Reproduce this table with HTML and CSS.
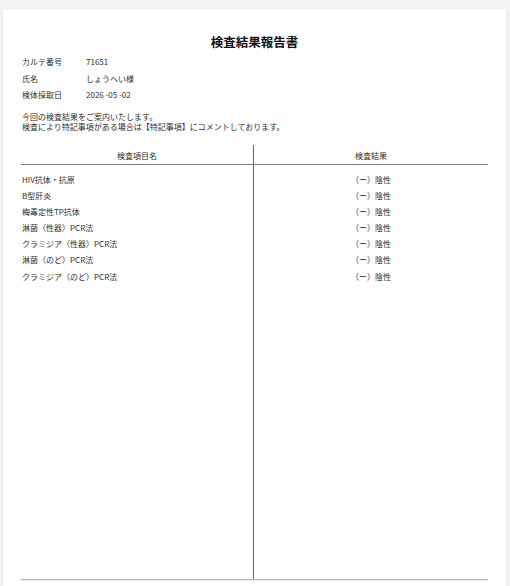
FILE: index.html
```html
<!DOCTYPE html>
<html lang="ja">
<head>
<meta charset="utf-8">
<link rel="stylesheet" href="styles.css">
</head>
<body>
<div class="page">
  <h1 class="title">検査結果報告書</h1>
  <div class="info">
    <span class="label">カルテ番号</span><span class="value">71651</span>
    <span class="label">氏名</span><span class="value">しょうへい様</span>
    <span class="label">検体採取日</span><span class="value">2026 -05 -02</span>
  </div>
  <p class="note">今回の検査結果をご案内いたします。<br>検査により特記事項がある場合は【特記事項】にコメントしております。</p>
  <div class="table">
    <div class="cell head left">検査項目名</div>
    <div class="cell head right">検査結果</div>
    <div class="cell item left first">HIV抗体・抗原</div>
    <div class="cell res right first">（ー）陰性</div>
    <div class="cell item left">B型肝炎</div>
    <div class="cell res right">（ー）陰性</div>
    <div class="cell item left">梅毒定性TP抗体</div>
    <div class="cell res right">（ー）陰性</div>
    <div class="cell item left">淋菌（性器）PCR法</div>
    <div class="cell res right">（ー）陰性</div>
    <div class="cell item left">クラミジア（性器）PCR法</div>
    <div class="cell res right">（ー）陰性</div>
    <div class="cell item left">淋菌（のど）PCR法</div>
    <div class="cell res right">（ー）陰性</div>
    <div class="cell item left">クラミジア（のど）PCR法</div>
    <div class="cell res right">（ー）陰性</div>
    <div class="cell fill left"></div>
    <div class="cell fill right"></div>
  </div>
</div>
</body>
</html>
```
FILE: styles.css
```css
html, body {
  margin: 0;
  padding: 0;
}
body {
  background: #f3f3f3;
  font-family: "Noto Sans CJK JP", "Noto Sans", sans-serif;
  color: #2e2e2e;
  overflow: hidden;
  height: 586px;
}
.page {
  box-sizing: border-box;
  margin: 9px 4px 0 3px;
  background: #fff;
  padding: 25px 18px 0 18px;
  height: 577px;
  box-shadow: 0 0 3px rgba(0,0,0,0.06);
}
.title {
  margin: 0;
  font-size: 12.5px;
  line-height: 16px;
  font-weight: 700;
  text-align: center;
  color: #111;
}
.info {
  margin-top: 4px;
  display: grid;
  grid-template-columns: 64px 1fr;
  grid-auto-rows: 16.5px;
  align-items: center;
  font-size: 8px;
  line-height: 10px;
}
.info .label, .info .value {
  padding-left: 1px;
}
.note {
  margin: 8px 0 0 0;
  padding-left: 1px;
  font-size: 8px;
  line-height: 10.5px;
}
.table {
  margin-top: 12px;
  height: 434px;
  display: grid;
  grid-template-columns: 233px 1fr;
  grid-template-rows: 20px 23px repeat(6, 16.2px) 1fr;
  border-bottom: 1px solid #b5b5b5;
  box-shadow: 0 1px 1px rgba(0,0,0,0.08);
  font-size: 8px;
  line-height: 10px;
}
.cell.left {
  border-right: 1px solid #666;
}
.head {
  text-align: center;
  padding-top: 6px;
  border-bottom: 1px solid #7a7a7a;
}
.item {
  padding-left: 1px;
  display: flex;
  align-items: center;
}
.res {
  display: flex;
  align-items: center;
  justify-content: center;
}
.first {
  padding-top: 7px;
}
```
